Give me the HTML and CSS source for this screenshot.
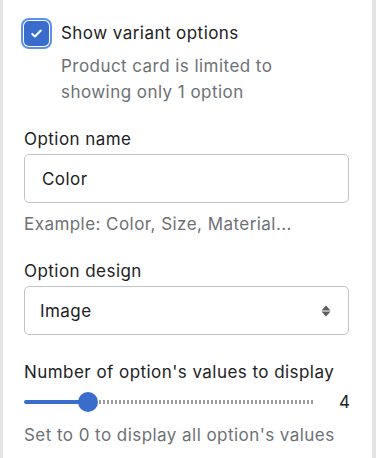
FILE: index.html
```html
<!DOCTYPE html>
<html>
<head>
  <meta charset="UTF-8">
  <title>Variant options</title>
  <link rel="stylesheet" href="styles.css">
</head>
<body>

<div class="panel">

  <!-- show variant options -->
  <label class="check-row">
    <span class="checkbox">
      <svg viewBox="0 0 20 20" width="17" height="17"><path d="M5 10.5l3.2 3L15 6.5" fill="none" stroke="#fff" stroke-width="2.4" stroke-linecap="round" stroke-linejoin="round"/></svg>
    </span>
    <span class="check-text">
      <span class="check-title">Show variant options</span>
      <span class="help">Product card is limited to showing only 1 option</span>
    </span>
  </label>

  <!-- option name -->
  <div class="field">
    <div class="label">Option name</div>
    <div class="box">Color</div>
    <div class="help after">Example: Color, Size, Material...</div>
  </div>

  <!-- option design -->
  <div class="field">
    <div class="label">Option design</div>
    <div class="box select">
      <span>Image</span>
      <svg class="arrows" viewBox="0 0 12 16" width="12" height="16"><path d="M6 2.5l4.5 5h-9z M6 13.5l4.5-5h-9z" fill="#5c5f62"/></svg>
    </div>
  </div>

  <!-- number of values -->
  <div class="field count">
    <div class="label">Number of option's values to display</div>
    <div class="slider">
      <div class="track">
        <div class="fill" style="width: 22%"></div>
        <div class="thumb" style="left: calc(22% - 10px)"></div>
        <div class="rest"></div>
      </div>
      <div class="value">4</div>
    </div>
    <div class="help">Set to 0 to display all option's values</div>
  </div>

</div>

</body>
</html>
```

FILE: styles.css
```css
html, body {
  margin: 0;
  background: #fff;
}
body {
  font-family: Inter, "Liberation Sans", sans-serif;
  font-size: 17px;
  letter-spacing: 0.45px;
  line-height: 26px;
  color: #202223;
}
.panel {
  border-left: 3px solid #e4e4e4;
  border-right: 4px solid #e4e4e4;
  height: 458px;
  box-sizing: border-box;
  padding: 20px 23px 0 21px;
}

.check-row {
  display: flex;
  cursor: pointer;
}
.checkbox {
  flex: none;
  width: 25px;
  height: 25px;
  margin: 1px 12px 0 0;
  box-sizing: border-box;
  border-radius: 5px;
  background: #3a6ccc;
  box-shadow: 0 0 0 1px #fff, 0 0 0 3px #5b8ff0;
  display: flex;
  align-items: center;
  justify-content: center;
}
.check-text {
  display: flex;
  flex-direction: column;
  max-width: 250px;
}
.help {
  color: #6d7175;
  padding-top: 7px;
}
.help.after {
  padding-top: 8px;
}

.field {
  margin-top: 21px;
}
.field.count {
  margin-top: 24px;
}
.count .help {
  padding-top: 5px;
}
.label {
  margin-bottom: 2px;
}
.box {
  height: 49px;
  box-sizing: border-box;
  border: 1.5px solid #c0c4c8;
  border-radius: 5px;
  padding: 0 17px;
  display: flex;
  align-items: center;
}
.select {
  justify-content: space-between;
  padding: 0 16px 0 15px;
}

.slider {
  display: flex;
  align-items: center;
  height: 30px;
}
.track {
  position: relative;
  flex: 1;
  height: 4px;
  margin-right: 25px;
}
.fill {
  height: 4px;
  border-radius: 2px;
  background: #3a6ccc;
}
.rest {
  position: absolute;
  left: 75px;
  right: 0;
  top: 0;
  height: 4px;
  background: repeating-linear-gradient(90deg, #999ca0 0 2px, transparent 2px 4px);
}
.thumb {
  position: absolute;
  top: -8px;
  width: 20px;
  height: 20px;
  border-radius: 50%;
  background: #3a6ccc;
}
.value {
  width: 10px;
  text-align: right;
}
```
